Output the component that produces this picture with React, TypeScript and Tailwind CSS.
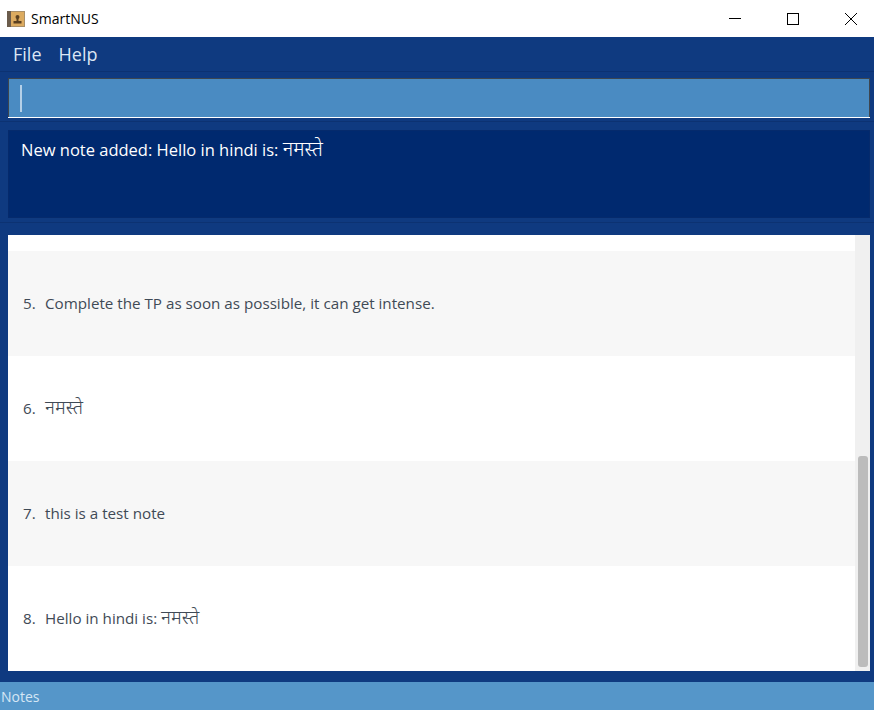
const HINDI = 'नमस्ते';

const notes = [
  { index: 5, text: 'Complete the TP as soon as possible, it can get intense.', shaded: true },
  { index: 6, text: <span className="text-[19px] font-light leading-none">{HINDI}</span>, shaded: false },
  { index: 7, text: 'this is a test note', shaded: true },
  { index: 8, text: <>Hello in hindi is: <span className="text-[19px] font-light leading-none">{HINDI}</span></>, shaded: false },
];

const TitleBar = () => (
  <div className="flex h-[37px] items-center bg-white">
    <svg width="18" height="18" viewBox="0 0 18 18" className="ml-[7px]">
      <rect x="0" y="1" width="18" height="16" fill="#a98f68" />
      <rect x="0" y="1" width="4" height="16" fill="#6b5c4c" />
      <rect x="4" y="2" width="13" height="14" fill="#dcab60" />
      <circle cx="10.5" cy="7" r="2" fill="#5a4020" />
      <rect x="9.5" y="8" width="2" height="3" fill="#5a4020" />
      <rect x="6.5" y="11" width="8" height="2.5" fill="#5a4020" />
    </svg>
    <span className="ml-[6px] text-[14px] text-black">SmartNUS</span>
    <div className="ml-auto flex items-center">
      <svg width="12" height="12" viewBox="0 0 12 12" className="mr-[46px]">
        <path d="M0 5.5 H12" stroke="#000" strokeWidth="1" />
      </svg>
      <svg width="12" height="12" viewBox="0 0 12 12" className="mr-[46px]">
        <rect x="0.5" y="0.5" width="11" height="11" fill="none" stroke="#000" strokeWidth="1" />
      </svg>
      <svg width="12" height="12" viewBox="0 0 12 12" className="mr-[17px]">
        <path d="M0 0 L12 12 M12 0 L0 12" stroke="#000" strokeWidth="1" />
      </svg>
    </div>
  </div>
);

const NoteRow = ({ index, text, shaded }: { index: number; text: React.ReactNode; shaded: boolean }) => (
  <div className={`flex h-[105px] items-center pl-[15px] text-[15.2px] text-[#3f4a56] ${shaded ? 'bg-[#f7f7f7]' : 'bg-white'}`}>
    <span className="w-[22px]">{index}.</span>
    <span>{text}</span>
  </div>
);

const App = () => {
  return (
    <div className="flex h-[710px] w-[874px] flex-col overflow-hidden bg-[#0f3a80] font-['Open_Sans','Noto_Sans',sans-serif]">
      <TitleBar />

      <div className="flex h-[35px] items-center gap-[17px] border-b border-[#0c3272] pl-[13px] text-[18px] text-[#dce6f4]">
        <span>File</span>
        <span>Help</span>
      </div>

      <div className="pl-[8px] pr-[4px] pt-[6px]">
        <div className="flex h-[39px] items-center border border-b-0 border-[#3d4650] bg-[#4a8bc2] pl-[11px]">
          <div className="h-[27px] w-[2px] bg-[#b5d0e8]" />
        </div>
        <div className="h-[1px] bg-white" />
      </div>

      <div className="mt-[3px] border-t border-[#0c3272] pl-[8px] pr-[4px] pt-[8px]">
        <div className="h-[88px] border border-[#052a6c] bg-[#00296f] px-[12px] py-[7px] text-[16.5px] text-white">
          New note added: Hello in hindi is: <span className="text-[20px] font-light leading-none">{HINDI}</span>
        </div>
      </div>

      <div className="mt-[4px] border-t border-[#0c3272] pl-[8px] pr-[4px] pt-[12px]">
        <div className="flex h-[436px] bg-white">
          <div className="flex-1 overflow-hidden">
            <div className="h-[16px] bg-white" />
            {notes.map(note => (
              <NoteRow key={note.index} {...note} />
            ))}
          </div>
          <div className="flex w-[15px] flex-col justify-end bg-[#f0f0f0] pb-[4px] pl-[3px] pr-[2px]">
            <div className="h-[211px] rounded-[3px] bg-[#bcbcbc]" />
          </div>
        </div>
      </div>

      <div className="mt-auto flex h-[28px] items-center bg-[#5596c9] pl-[1px] text-[14px] text-[#d5e6f5]">
        Notes
      </div>
    </div>
  );
};

export default App;
